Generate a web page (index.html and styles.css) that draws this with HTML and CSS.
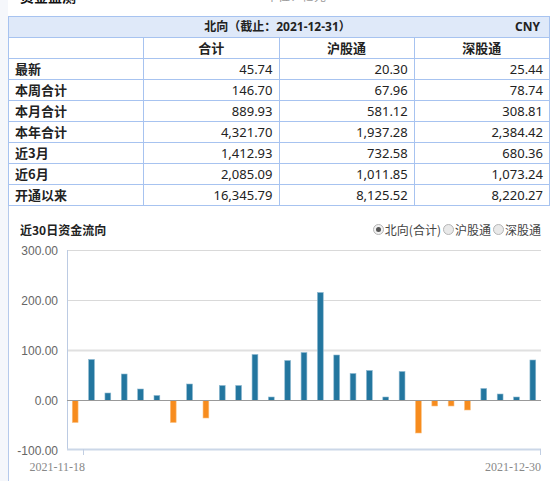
FILE: index.html
```html
<!DOCTYPE html>
<html lang="zh-CN">
<head>
<meta charset="utf-8">
<title>资金监测</title>
<link rel="stylesheet" href="styles.css">
</head>
<body>
<div class="page">
  <div class="topbar">
    <span class="top-title">资金监测</span>
    <span class="top-note">单位：亿元</span>
  </div>
  <table class="flow-table">
    <colgroup><col><col><col><col></colgroup>
    <thead>
      <tr class="caption-row">
        <th colspan="4">
          <div class="caption">
            <span class="cap-side"></span>
            <span class="cap-main">北向（截止：2021-12-31）</span>
            <span class="cap-side cap-unit">CNY</span>
          </div>
        </th>
      </tr>
      <tr class="head-row">
        <th></th><th>合计</th><th>沪股通</th><th>深股通</th>
      </tr>
    </thead>
    <tbody>
      <tr><th>最新</th><td>45.74</td><td>20.30</td><td>25.44</td></tr>
      <tr><th>本周合计</th><td>146.70</td><td>67.96</td><td>78.74</td></tr>
      <tr><th>本月合计</th><td>889.93</td><td>581.12</td><td>308.81</td></tr>
      <tr><th>本年合计</th><td>4,321.70</td><td>1,937.28</td><td>2,384.42</td></tr>
      <tr><th>近3月</th><td>1,412.93</td><td>732.58</td><td>680.36</td></tr>
      <tr><th>近6月</th><td>2,085.09</td><td>1,011.85</td><td>1,073.24</td></tr>
      <tr><th>开通以来</th><td>16,345.79</td><td>8,125.52</td><td>8,220.27</td></tr>
    </tbody>
  </table>
  <div class="chart">
    <div class="chart-head">
      <span class="chart-title">近30日资金流向</span>
      <div class="legend">
        <span class="opt"><span class="radio on"></span>北向(合计)</span>
        <span class="opt"><span class="radio"></span>沪股通</span>
        <span class="opt"><span class="radio"></span>深股通</span>
      </div>
    </div>
    <svg class="plot" width="541" height="243" viewBox="9 238 541 243" xmlns="http://www.w3.org/2000/svg">
      <g class="grid">
        <line x1="67" y1="250.5" x2="541" y2="250.5"/>
        <line x1="67" y1="300.5" x2="541" y2="300.5"/>
        <line x1="67" y1="350.5" x2="541" y2="350.5" class="thick"/>
      </g>
      <line x1="67.5" y1="250" x2="67.5" y2="450" class="yaxis"/>
      <line x1="67" y1="449.5" x2="541" y2="449.5" class="xaxis"/>
      <line x1="83.5" y1="449" x2="83.5" y2="455" class="tick"/>
      <line x1="540.5" y1="449" x2="540.5" y2="455" class="tick"/>
      <g class="ylab">
        <text x="58" y="254.5">300.00</text>
        <text x="58" y="304.5">200.00</text>
        <text x="58" y="354.5">100.00</text>
        <text x="58" y="404.5">0.00</text>
        <text x="58" y="454.5">-100.00</text>
      </g>
      <g class="xlab">
        <text x="85" y="471">2021-11-18</text>
        <text x="541" y="471">2021-12-30</text>
      </g>
      <g id="bars"></g>
      <line x1="67" y1="400.5" x2="541" y2="400.5" class="zero"/>
    </svg>
  </div>
</div>
<script>
  (function () {
    var vals = [-44, 82, 15, 53, 23, 10, -44, 33, -35, 30, 30, 92, 7, 80, 96, 216, 91, 54, 60, 7, 58, -65, -11, -11, -19, 24, 13, 7, 81];
    var g = document.getElementById('bars');
    var ns = 'http://www.w3.org/2000/svg';
    var band = (541 - 67) / vals.length;
    vals.forEach(function (v, i) {
      var cx = 67 + (i + 0.5) * band;
      var h = Math.abs(v) * 0.5;
      var r = document.createElementNS(ns, 'rect');
      r.setAttribute('x', (cx - 2.9).toFixed(2));
      r.setAttribute('width', '5.8');
      r.setAttribute('y', v >= 0 ? (400.5 - h).toFixed(2) : '400.5');
      r.setAttribute('height', h.toFixed(2));
      r.setAttribute('class', v >= 0 ? 'pos' : 'neg');
      g.appendChild(r);
    });
  })();
</script>
</body>
</html>
```
FILE: styles.css
```css
html, body {
  margin: 0;
  padding: 0;
}
body {
  background: #f5f7fb;
  font-family: "Noto Sans", "Noto Sans CJK SC", sans-serif;
  color: #222;
  overflow: hidden;
}
.page {
  margin-left: 8px;
  background: #fff;
  height: 481px;
}
.topbar {
  height: 16px;
  overflow: hidden;
  display: flex;
  align-items: flex-start;
}
.top-title {
  margin-top: -12px;
  margin-left: 12px;
  font-size: 14px;
  line-height: 16px;
  font-weight: 700;
  font-family: "Noto Sans CJK SC", sans-serif;
  color: #111;
}
.top-note {
  margin-top: -12px;
  margin-left: 190px;
  font-size: 12px;
  line-height: 16px;
  font-family: "Noto Sans CJK SC", sans-serif;
  color: #999;
}
.flow-table {
  width: 100%;
  border-collapse: collapse;
  table-layout: fixed;
  font-size: 13px;
}
.flow-table th,
.flow-table td {
  border: 1px solid #a7c3f0;
  height: 20px;
  line-height: 20px;
  padding: 0 6px;
  white-space: nowrap;
}
.caption-row th {
  background: #dfe9f9;
  font-weight: 700;
  font-size: 12px;
  padding: 0 9px 0 6px;
}
.caption {
  display: flex;
  align-items: center;
}
.cap-side {
  flex: 1;
}
.cap-unit {
  text-align: right;
}
.head-row th {
  font-weight: 700;
  text-align: center;
  font-family: "Noto Sans CJK SC", sans-serif;
}
tbody th {
  text-align: left;
  font-weight: 700;
  padding-left: 11px;
  font-family: "Noto Sans CJK SC", sans-serif;
}
tbody td {
  text-align: right;
}
.chart {
  border-left: 1px solid #b6caeb;
  height: 275px;
}
.chart-head {
  display: flex;
  justify-content: space-between;
  align-items: center;
  height: 18px;
  padding: 14px 9px 0 11px;
}
.chart-title {
  font-family: "Noto Sans CJK SC", sans-serif;
  font-size: 12px;
  font-weight: 700;
  color: #222;
}
.legend {
  display: flex;
  align-items: center;
  gap: 2px;
  font-family: "Noto Sans CJK SC", sans-serif;
  font-size: 12px;
  color: #444;
}
.opt {
  display: flex;
  align-items: center;
}
.radio {
  width: 9px;
  height: 9px;
  border-radius: 50%;
  border: 1px solid #b5b5b5;
  background: #e9e9e9;
  margin-right: 1px;
  position: relative;
}
.radio.on {
  background: #f2f2f2;
}
.radio.on::after {
  content: "";
  position: absolute;
  left: 2px;
  top: 2px;
  width: 5px;
  height: 5px;
  border-radius: 50%;
  background: #555;
}
.plot {
  display: block;
}
.grid line {
  stroke: #d9d9d9;
  stroke-width: 1;
}
.grid line.thick {
  stroke-width: 2;
  stroke: #e0e0e0;
}
.yaxis {
  stroke: #bccbe3;
  stroke-width: 1;
}
.xaxis {
  stroke: #cbd7e8;
  stroke-width: 2;
}
.tick {
  stroke: #c2cfe3;
  stroke-width: 1;
}
.zero {
  stroke: #999;
  stroke-width: 1;
}
.ylab text {
  font-family: "Liberation Sans", Arial, sans-serif;
  font-size: 12px;
  fill: #666;
  text-anchor: end;
}
.xlab text {
  font-family: "Liberation Serif", serif;
  font-size: 12px;
  fill: #888;
  text-anchor: end;
}
rect.pos {
  fill: #23769f;
  stroke: #8cb8d0;
  stroke-width: 0.6;
}
rect.neg {
  fill: #f78c1e;
  stroke: #fbc07f;
  stroke-width: 0.6;
}
```
